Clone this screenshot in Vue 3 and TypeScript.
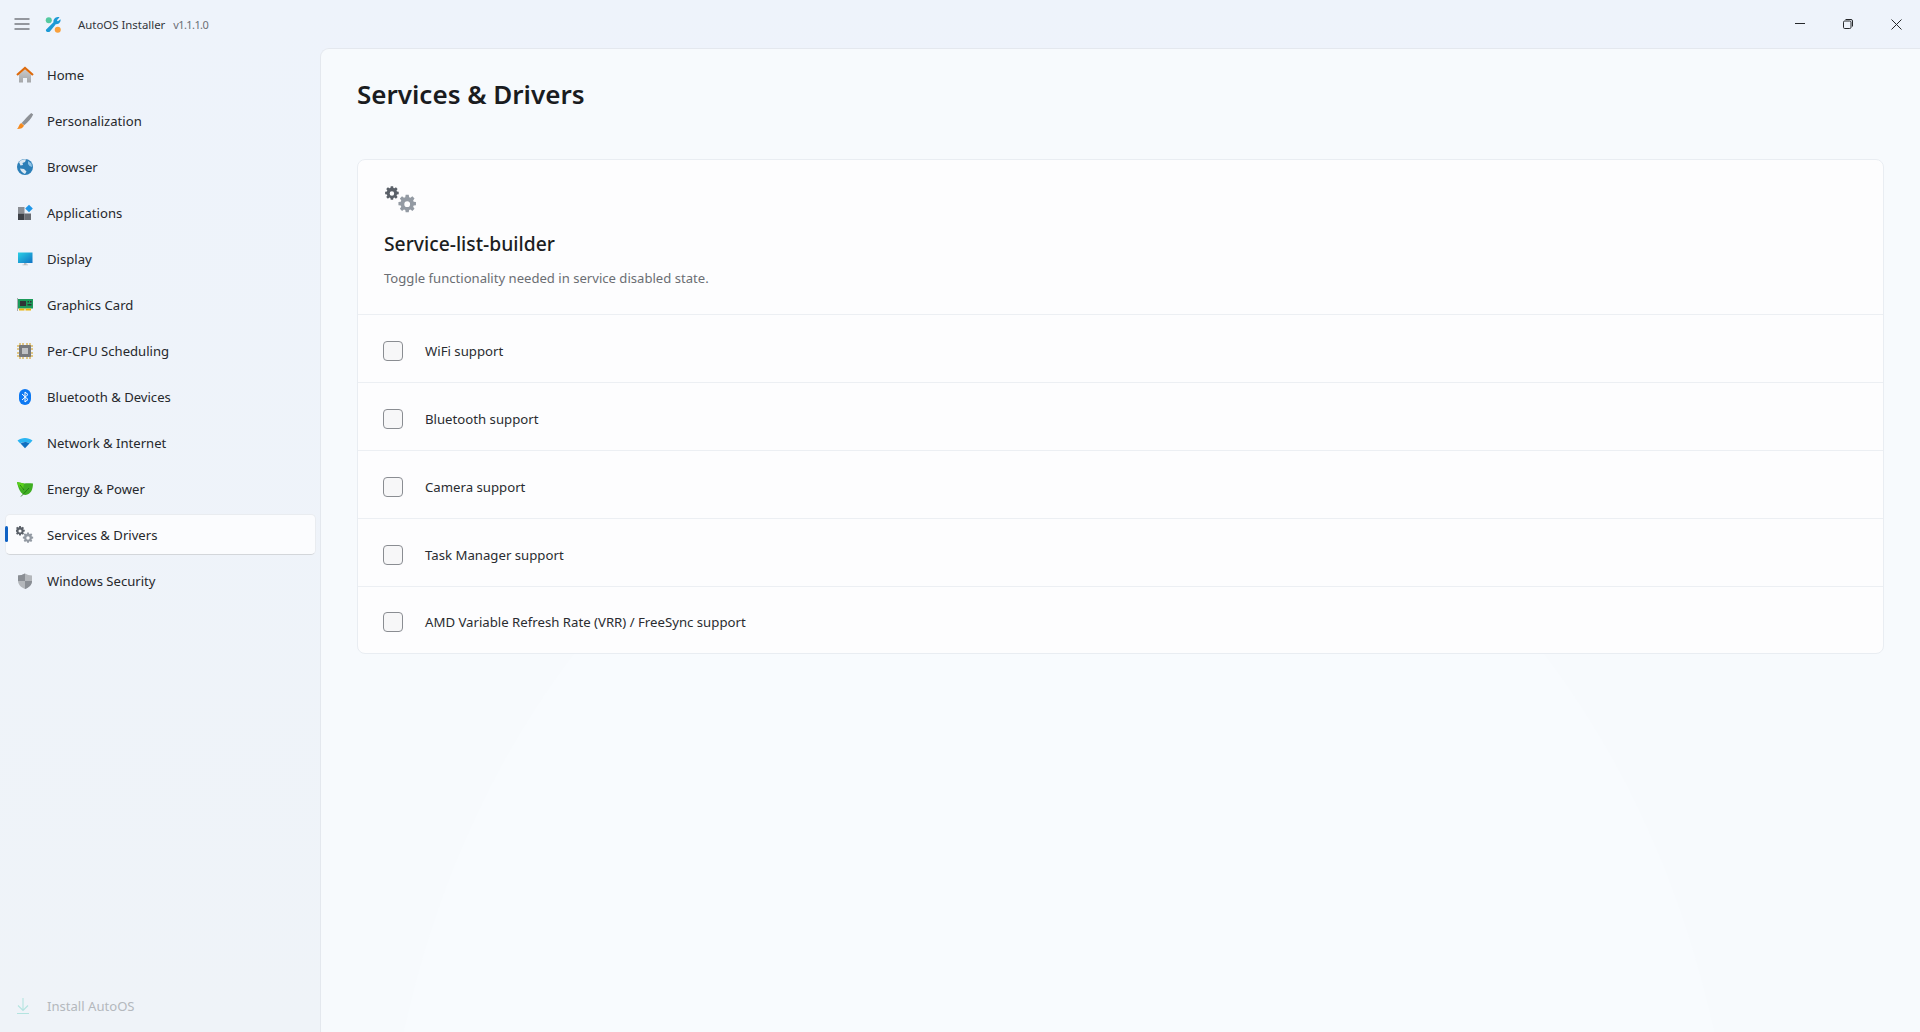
<script setup lang="ts">
import { ref } from 'vue'

interface NavItem {
  id: string
  label: string
}

const navItems: NavItem[] = [
  { id: 'home', label: 'Home' },
  { id: 'brush', label: 'Personalization' },
  { id: 'globe', label: 'Browser' },
  { id: 'apps', label: 'Applications' },
  { id: 'display', label: 'Display' },
  { id: 'gpu', label: 'Graphics Card' },
  { id: 'cpu', label: 'Per-CPU Scheduling' },
  { id: 'bluetooth', label: 'Bluetooth & Devices' },
  { id: 'wifi', label: 'Network & Internet' },
  { id: 'leaf', label: 'Energy & Power' },
  { id: 'gears', label: 'Services & Drivers' },
  { id: 'shield', label: 'Windows Security' }
]

const active = ref('gears')

const options = ref([
  { label: 'WiFi support', checked: false },
  { label: 'Bluetooth support', checked: false },
  { label: 'Camera support', checked: false },
  { label: 'Task Manager support', checked: false },
  { label: 'AMD Variable Refresh Rate (VRR) / FreeSync support', checked: false }
])

const gearPath =
  'M10.2 1h3.6l.5 2.7 1.5.6 2.3-1.6 2.5 2.5-1.6 2.3.6 1.5 2.7.5v3.6l-2.7.5-.6 1.5 1.6 2.3-2.5 2.5-2.3-1.6-1.5.6-.5 2.7h-3.6l-.5-2.7-1.5-.6-2.3 1.6-2.5-2.5 1.6-2.3-.6-1.5-2.7-.5v-3.6l2.7-.5.6-1.5-1.6-2.3 2.5-2.5 2.3 1.6 1.5-.6zM12 8.6a3.4 3.4 0 1 0 0 6.8 3.4 3.4 0 0 0 0-6.8z'
</script>

<template>
  <div class="window">
    <header class="titlebar">
      <button class="menu-btn" aria-label="Menu">
        <svg width="16" height="12" viewBox="0 0 16 12" fill="none" stroke="#3a3d42" stroke-width="1.1">
          <path d="M.5 1h15M.5 6h15M.5 11h15" />
        </svg>
      </button>
      <svg class="logo" width="17" height="17" viewBox="0 0 18 18">
        <circle cx="4" cy="4.4" r="3.200" fill="#54c9a0" />
        <circle cx="13.5" cy="14.500" r="3.200" fill="#f9a03c" />
        <path d="M1 14.500l8-8c-.4-2.600 1.500-5.200 4.600-5.400.8 0 1.300.1 1.800.3L12.600 4.400l1 1.200 2.800-2.200c.6 2.600-1.400 5.400-4.800 5.200L5 16.600c-1.500 1.100-4.700.1-4-2.100z" fill="#1d9ad6" />
      </svg>
      <span class="app-name">AutoOS Installer</span>
      <span class="app-version">v1.1.1.0</span>
      <div class="caption">
        <button class="caption-btn" aria-label="Minimize">
          <svg width="10" height="10" viewBox="0 0 10 10"><path d="M0 4.500h10" stroke="#26282b" stroke-width="1" /></svg>
        </button>
        <button class="caption-btn" aria-label="Restore">
          <svg width="10" height="10" viewBox="0 0 10 10" fill="none" stroke="#26282b" stroke-width="1">
            <rect x=".5" y="2" width="7.500" height="7.500" rx="1.200" />
            <path d="M2.500.5h5.500a1.500 1.500 0 0 1 1.500 1.500v5.500" />
          </svg>
        </button>
        <button class="caption-btn" aria-label="Close">
          <svg width="11" height="11" viewBox="0 0 11 11"><path d="M.5.5l10 10M10.500.5l-10 10" stroke="#26282b" stroke-width="1" /></svg>
        </button>
      </div>
    </header>

    <div class="body">
      <aside class="sidebar">
        <nav class="nav">
          <button
            v-for="item in navItems"
            :key="item.id"
            class="nav-item"
            :class="{ 'nav-item--active': item.id === active }"
            @click="active = item.id"
          >
            <span class="nav-icon">
              <svg v-if="item.id === 'home'" width="18" height="18" viewBox="0 0 18 18">
                <defs>
                  <linearGradient id="wall" x1="0" y1="0" x2="0" y2="1">
                    <stop offset="0" stop-color="#c9cacc" />
                    <stop offset="1" stop-color="#a4a6a9" />
                  </linearGradient>
                </defs>
                <path d="M3 8.500L9 3.500l6 5V16.500h-4v-4.500H7v4.500H3z" fill="url(#wall)" />
                <path d="M1 9L9 2l8 7" fill="none" stroke="#dd6a0c" stroke-width="2.200" />
              </svg>
              <svg v-else-if="item.id === 'brush'" width="18" height="18" viewBox="0 0 18 18">
                <path d="M15.200 1l2 1.500c-2 4-5 7.500-9 10.800l-2.600-2.300c3-3.500 6.500-7 9.600-10z" fill="#8e9196" />
                <path d="M5.200 11l2.800 2.500c-.8 2.400-3 3.500-7 3.500 1.800-1.200 1.800-4.600 4.200-6z" fill="#f58a1f" />
              </svg>
              <svg v-else-if="item.id === 'globe'" width="18" height="18" viewBox="0 0 18 18">
                <circle cx="9" cy="9" r="8" fill="#2c7fb8" />
                <path d="M3 4c2-2 5-3 7-2.500L9 4 6.500 5 7 7 4.500 7.500zM4 10.500l4 .5 2.500 2.500L9 16c-2.500-1-4.500-3-5-5.500z" fill="#dbe8f2" />
                <path d="M12 3l3.500 2.500L16 9l-2.500-1-1.500-2z" fill="#8fc3e6" />
              </svg>
              <svg v-else-if="item.id === 'apps'" width="18" height="18" viewBox="0 0 18 18">
                <rect x="2" y="3" width="6.500" height="6.500" fill="#8b8e94" />
                <rect x="2" y="9.500" width="6.500" height="6.500" fill="#3e4147" />
                <rect x="8.500" y="9.500" width="6.500" height="6.500" fill="#6a6d73" />
                <rect x="10.300" y="1.800" width="5.400" height="5.400" fill="#1e96e8" transform="rotate(45 13 4.500)" />
              </svg>
              <svg v-else-if="item.id === 'display'" width="18" height="18" viewBox="0 0 18 18">
                <defs>
                  <linearGradient id="screen" x1="0" y1="0" x2="1" y2="1">
                    <stop offset="0" stop-color="#2bd0e6" />
                    <stop offset="1" stop-color="#1072c4" />
                  </linearGradient>
                </defs>
                <rect x="2" y="2.500" width="14.500" height="10.500" fill="url(#screen)" />
                <path d="M8 13h2.500v1.500H8zM6.500 14.500h5.500v.8H6.500z" fill="#b9bcc0" />
              </svg>
              <svg v-else-if="item.id === 'gpu'" width="18" height="18" viewBox="0 0 18 18">
                <path d="M1.500 2v13" stroke="#a9acb0" stroke-width="1" />
                <rect x="2" y="3" width="15" height="9.500" fill="#1b9a5a" />
                <rect x="4" y="5" width="6" height="5" fill="#2f3336" />
                <path d="M11.500 5h1.500v1.500h-1.500zM14 5h1.500v1.500H14zM11.500 8h4v1.500h-4z" fill="#2f3336" />
                <rect x="3" y="12.500" width="5.500" height="2" fill="#eab308" />
                <rect x="9.500" y="12.500" width="5.500" height="2" fill="#eab308" />
              </svg>
              <svg v-else-if="item.id === 'cpu'" width="18" height="18" viewBox="0 0 18 18">
                <path d="M4 1v16M7 1v16M11 1v16M14 1v16M1 4h16M1 7h16M1 11h16M1 14h16" stroke="#d39a0e" stroke-width="1" />
                <rect x="3" y="3" width="12" height="12" rx="1" fill="#77797d" />
                <rect x="6" y="6" width="6" height="6" fill="#bfc1c4" />
              </svg>
              <svg v-else-if="item.id === 'bluetooth'" width="18" height="18" viewBox="0 0 18 18">
                <rect x="3" y="1" width="12" height="16" rx="6" fill="#0d78f2" />
                <path d="M6 6l6 5.500-3 2.500V4l3 2.500L6 12" fill="none" stroke="#fff" stroke-width="1" />
              </svg>
              <svg v-else-if="item.id === 'wifi'" width="18" height="18" viewBox="0 0 18 18">
                <path d="M1.500 6.500C5.500 3 12.500 3 16.500 6.500L13.800 9.500c-2.800-2-6.800-2-9.600 0z" fill="#2bb4f2" />
                <path d="M4.500 9.500c2.800-2 6.200-2 9 0L9 14.300z" fill="#0f6fc0" />
              </svg>
              <svg v-else-if="item.id === 'leaf'" width="18" height="18" viewBox="0 0 18 18">
                <path d="M1 2l7 1.500c3-.5 6-.5 9 0 0 5.500-2 11-7.500 11.500C5 15 2 8 1 2z" fill="#3fae22" />
                <path d="M1 2l7 1.500-1 6C4 8 2 6 1 2z" fill="#59d01a" />
                <path d="M5 16.500l8-8.500M4 5l4 5" stroke="#1d6e12" stroke-width=".8" fill="none" />
              </svg>
              <svg v-else-if="item.id === 'gears'" width="18" height="18" viewBox="0 0 18 18">
                <path :d="gearPath" fill="#5a6068" transform="translate(-1.500 -.5) scale(.46)" />
                <path :d="gearPath" fill="#939aa3" transform="translate(6 6) scale(.5)" />
              </svg>
              <svg v-else width="18" height="18" viewBox="0 0 18 18">
                <path d="M9 1.500c2 1.300 4.500 2 7 2v5c0 4-3 7-7 8.500C5 15.500 2 12.500 2 8.500v-5c2.500 0 5-.7 7-2z" fill="#b4b7bb" />
                <path d="M9 1.500v7.500H2v-.5-5c2.500 0 5-.7 7-2zM9 9h7c0 4-3 6.500-7 8z" fill="#8a8e94" />
              </svg>
            </span>
            <span>{{ item.label }}</span>
          </button>
        </nav>
        <button class="nav-item nav-item--disabled" disabled>
          <span class="nav-icon">
            <svg width="14" height="18" viewBox="0 0 14 18" fill="none" stroke="#b4e4e0" stroke-width="1.100">
              <path d="M7 1v12M2 8.500L7 13.500l5-5M1 16.500h12" />
            </svg>
          </span>
          <span>Install AutoOS</span>
        </button>
      </aside>

      <main class="content">
        <div class="bloom"></div>
        <h1 class="page-title">Services &amp; Drivers</h1>
        <section class="card">
          <div class="card-head">
            <svg class="card-icon" width="36" height="30" viewBox="0 0 36 30">
              <path :d="gearPath" fill="#5a6068" transform="translate(0 -.5) scale(.66)" />
              <path :d="gearPath" fill="#939aa3" transform="translate(13 8) scale(.85)" />
            </svg>
            <h2 class="card-title">Service-list-builder</h2>
            <p class="card-desc">Toggle functionality needed in service disabled state.</p>
          </div>
          <label v-for="opt in options" :key="opt.label" class="row">
            <input v-model="opt.checked" type="checkbox" class="check" />
            <span>{{ opt.label }}</span>
          </label>
        </section>
      </main>
    </div>
  </div>
</template>

<style>
html,
body {
  margin: 0;
  height: 100%;
  overflow: hidden;
}
</style>

<style scoped>
.window {
  width: 1920px;
  height: 1032px;
  display: flex;
  flex-direction: column;
  background: linear-gradient(180deg, #eef3fb 0%, #eff3f8 100%);
  color: #1c1e21;
  font-family: 'Noto Sans', 'Open Sans', sans-serif;
  font-size: 13.1px;
  overflow: hidden;
}

button {
  font: inherit;
  color: inherit;
  border: none;
  background: none;
}

.titlebar {
  flex: 0 0 48px;
  display: flex;
  align-items: center;
  font-size: 11.400px;
}

.menu-btn {
  width: 44px;
  padding: 0;
  display: flex;
  justify-content: center;
}

.logo {
  margin: 1px 16px 0 1px;
}

.app-name {
  color: #33363a;
  margin-right: 8px;
}

.app-version {
  color: #6c6f74;
  font-size: 11px;
  letter-spacing: -0.6px;
}

.caption {
  margin-left: auto;
  display: flex;
}

.caption-btn {
  width: 48px;
  height: 48px;
  padding: 0;
  display: flex;
  align-items: center;
  justify-content: center;
}

.body {
  flex: 1;
  display: flex;
  min-height: 0;
}

.sidebar {
  flex: 0 0 320px;
  display: flex;
  flex-direction: column;
  padding: 6px 0 6px 5px;
  box-sizing: border-box;
}

.nav {
  display: flex;
  flex-direction: column;
  gap: 5px;
}

.nav-item {
  position: relative;
  width: 311px;
  height: 41px;
  flex: none;
  padding: 0;
  display: flex;
  align-items: center;
  text-align: left;
  border-radius: 5px;
  color: #26282c;
  border: 1px solid transparent;
  box-sizing: border-box;
}

.nav-icon {
  width: 41px;
  padding-left: 10px;
  box-sizing: border-box;
  display: flex;
  flex: none;
}

.nav-item--active {
  background: #fbfcfe;
  border-color: #e9ecf0 #e9ecf0 #d3d6da;
}

.nav-item--active::before {
  content: '';
  position: absolute;
  left: -1px;
  top: 11px;
  width: 3px;
  height: 16px;
  border-radius: 2px;
  background: #0f62c4;
}

.nav-item--disabled {
  margin-top: auto;
  color: #b4b8bd;
}

.content {
  position: relative;
  flex: 1;
  min-width: 0;
  padding: 0 36px;
  background: #f7fafd;
  border-left: 1px solid #e4e8ee;
  border-top: 1px solid #e4e8ee;
  border-top-left-radius: 9px;
  overflow: hidden;
}

.bloom {
  position: absolute;
  left: 58px;
  top: 344px;
  width: 1360px;
  height: 1746px;
  border-radius: 50%;
  background: #f8fbfe;
}

.page-title {
  position: relative;
  margin: 0;
  padding-top: 25px;
  height: 85px;
  font-size: 26px;
  font-weight: 600;
  line-height: 40px;
  color: #1a1c1f;
}

.card {
  position: relative;
  background: #fdfdfe;
  border: 1px solid #e9edf2;
  border-radius: 8px;
}

.card-head {
  height: 154px;
  padding: 26px 26px 0;
  box-sizing: border-box;
}

.card-icon {
  display: block;
}

.card-title {
  margin: 14px 0 0;
  font-size: 19.300px;
  font-weight: 500;
  line-height: 28px;
  color: #1c1e21;
}

.card-desc {
  margin: 10px 0 0;
  font-size: 13.100px;
  line-height: 20px;
  color: #6b6e73;
}

.row {
  height: 68px;
  padding: 5px 0 0 25px;
  display: flex;
  align-items: center;
  border-top: 1px solid #eceff3;
  box-sizing: border-box;
  color: #2a2c30;
  font-size: 13.200px;
}

.row:last-child {
  height: 67px;
  padding-top: 3px;
}

.check {
  appearance: none;
  width: 20px;
  height: 20px;
  margin: 0 22px 0 0;
  background: #f7f7f8;
  border: 1px solid #8a8d92;
  border-radius: 4px;
  flex: none;
}
</style>
